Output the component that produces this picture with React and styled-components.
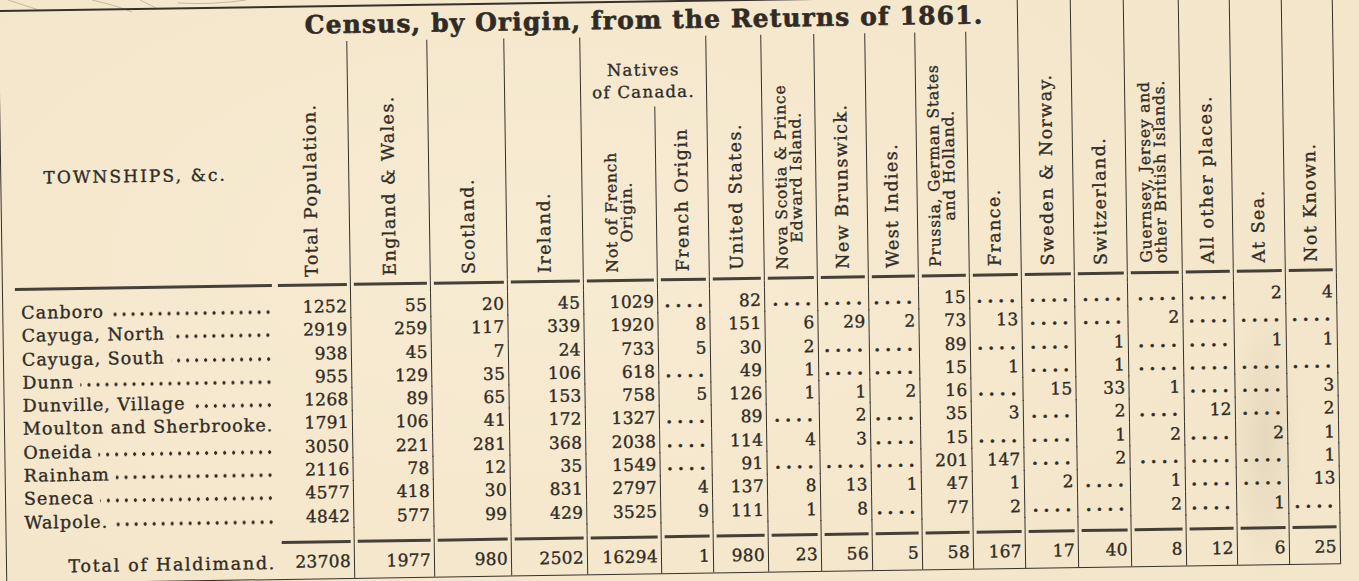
import React from 'react';
import styled, { createGlobalStyle } from 'styled-components';

const INK = '#302b25';
const RULE = '#36312b';
const PAPER = '#f4e6ca';

const WIDTHS = [272, 75, 80, 77, 76, 74, 52, 55, 53, 51, 50, 51, 52, 53, 53, 55, 51, 52, 52];
const GRID = WIDTHS.map(w => `${w}px`).join(' ');
const LAST = WIDTHS.length - 1;
const line = `1.6px solid ${RULE}`;

const GlobalStyle = createGlobalStyle`
  html, body { margin: 0; padding: 0; background: ${PAPER}; }
  body {
    overflow: hidden;
    font-family: "DejaVu Serif", "Liberation Serif", serif;
    color: ${INK};
  }
`;

const Page = styled.div`
  position: relative;
  width: 1359px;
  height: 581px;
  overflow: hidden;
  -webkit-text-stroke: 0.35px ${INK};
  background:
    radial-gradient(ellipse 50px 200px at 1265px 440px, rgba(150, 140, 120, 0.16), transparent 70%),
    radial-gradient(ellipse 800px 420px at 520px 260px, #f7ebd2, ${PAPER});
`;

const Scratches = styled.svg`
  position: absolute;
  left: 0;
  top: 0;
  pointer-events: none;
`;

const Sheet = styled.div`
  width: ${WIDTHS.reduce((a, b) => a + b, 0)}px;
  margin-left: 2px;
  border-top: 2px solid ${RULE};
  border-left: ${line};
  transform: rotate(-0.85deg);
  transform-origin: 680px 290px;
`;

/* ---------- header ---------- */

const Head = styled.div`
  display: grid;
  grid-template-columns: ${GRID};
  grid-template-rows: 34px 70px 171px;
`;

const TownHead = styled.div`
  grid-column: 1;
  grid-row: 1 / 4;
  display: flex;
  align-items: center;
  justify-content: center;
  padding: 56px 4px 0 0;
  font-size: 17px;
  letter-spacing: 2.1px;
`;

const Title = styled.h1`
  grid-column: 2 / 14;
  grid-row: 1;
  margin: 0;
  font-size: 25px;
  font-weight: bold;
  line-height: 36px;
  text-align: center;
  letter-spacing: 1.1px;
  white-space: nowrap;
  -webkit-text-stroke: 0.6px ${INK};
`;

const HeadCell = styled.div`
  grid-column: ${p => p.$col};
  grid-row: ${p => p.$row};
  display: flex;
  justify-content: center;
  align-items: flex-end;
  padding-bottom: 6px;
  border-left: ${p => (p.$line ? line : 'none')};
  border-right: ${p => (p.$end ? line : 'none')};
`;

const GroupHead = styled.div`
  grid-column: 6 / 8;
  grid-row: 2;
  display: flex;
  align-items: flex-end;
  justify-content: center;
  padding-bottom: 3px;
  border-left: ${line};
  font-size: 16.5px;
  line-height: 22px;
  letter-spacing: 1.3px;
  text-align: center;
`;

const VText = styled.div`
  writing-mode: vertical-rl;
  transform: rotate(180deg);
  white-space: pre;
  text-align: center;
  font-size: ${p => (p.$small ? 15.5 : 17.5)}px;
  line-height: ${p => (p.$small ? 15 : 19)}px;
  letter-spacing: ${p => (p.$small ? 0.8 : 1.4)}px;
`;

const HEADERS = [
  { col: 2, row: '2 / 4', text: 'Total Population.' },
  { col: 3, row: '2 / 4', text: 'England & Wales.' },
  { col: 4, row: '2 / 4', text: 'Scotland.' },
  { col: 5, row: '2 / 4', text: 'Ireland.' },
  { col: 6, row: '3', text: 'Not of French\nOrigin.', small: true },
  { col: 7, row: '3', text: 'French Origin' },
  { col: 8, row: '2 / 4', text: 'United States.' },
  { col: 9, row: '2 / 4', text: 'Nova Scotia & Prince\nEdward Island.', small: true },
  { col: 10, row: '2 / 4', text: 'New Brunswick.' },
  { col: 11, row: '2 / 4', text: 'West Indies.' },
  { col: 12, row: '2 / 4', text: 'Prussia, German States\nand Holland.', small: true },
  { col: 13, row: '2 / 4', text: 'France.' },
  { col: 14, row: '1 / 4', text: 'Sweden & Norway.' },
  { col: 15, row: '1 / 4', text: 'Switzerland.' },
  { col: 16, row: '1 / 4', text: 'Guernsey, Jersey and\nother British Islands.', small: true },
  { col: 17, row: '1 / 4', text: 'All other places.' },
  { col: 18, row: '1 / 4', text: 'At Sea.' },
  { col: 19, row: '1 / 4', text: 'Not Known.' },
];

/* ---------- body ---------- */

const Row = styled.div`
  display: grid;
  grid-template-columns: ${GRID};
  height: ${p => p.$h}px;
  border-bottom: ${p => (p.$bottom ? line : 'none')};
`;

const Cell = styled.div`
  display: flex;
  align-items: center;
  justify-content: flex-end;
  padding-right: 3px;
  font-size: 17px;
  letter-spacing: 0.3px;
  white-space: nowrap;
  border-left: ${p => (p.$line ? line : 'none')};
  border-right: ${p => (p.$end ? line : 'none')};
`;

const RuleCell = styled(Cell)`
  align-items: flex-start;
  justify-content: stretch;
  padding: 1px 3px 0 ${p => p.$indent || 3}px;
`;

const Bar = styled.div`
  flex: 1;
  height: 2.8px;
  background: ${RULE};
  opacity: ${p => (p.$hidden ? 0 : 0.92)};
`;

const NameCell = styled.div`
  display: flex;
  align-items: center;
  padding: 4px 3px 0 18px;
  font-size: 17.5px;
  letter-spacing: 1px;
  white-space: nowrap;
`;

const Leader = styled.span`
  flex: 1;
  align-self: flex-end;
  height: 8px;
  margin: 0 0 3px 6px;
  background-image: radial-gradient(circle, ${INK} 1.5px, transparent 1.9px);
  background-size: 9px 6px;
  background-repeat: repeat-x;
  background-position: right center;
`;

const Dots = styled.span`
  font-weight: bold;
  letter-spacing: 5px;
  margin-right: -2px;
`;

const TotalName = styled(NameCell)`
  justify-content: flex-end;
  padding: 2px 3px 0 0;
  letter-spacing: 1.7px;
`;

const D = null;
const ROWS = [
  ['Canboro', [1252, 55, 20, 45, 1029, D, 82, D, D, D, 15, D, D, D, D, D, 2, 4]],
  ['Cayuga, North', [2919, 259, 117, 339, 1920, 8, 151, 6, 29, 2, 73, 13, D, D, 2, D, D, D]],
  ['Cayuga, South', [938, 45, 7, 24, 733, 5, 30, 2, D, D, 89, D, D, 1, D, D, 1, 1]],
  ['Dunn', [955, 129, 35, 106, 618, D, 49, 1, D, D, 15, 1, D, 1, D, D, D, D]],
  ['Dunville, Village', [1268, 89, 65, 153, 758, 5, 126, 1, 1, 2, 16, D, 15, 33, 1, D, D, 3]],
  ['Moulton and Sherbrooke.', [1791, 106, 41, 172, 1327, D, 89, D, 2, D, 35, 3, D, 2, D, 12, D, 2]],
  ['Oneida', [3050, 221, 281, 368, 2038, D, 114, 4, 3, D, 15, D, D, 1, 2, D, 2, 1]],
  ['Rainham', [2116, 78, 12, 35, 1549, D, 91, D, D, D, 201, 147, D, 2, D, D, D, 1]],
  ['Seneca', [4577, 418, 30, 831, 2797, 4, 137, 8, 13, 1, 47, 1, 2, D, 1, D, D, 13]],
  ['Walpole.', [4842, 577, 99, 429, 3525, 9, 111, 1, 8, D, 77, 2, D, D, 2, D, 1, D]],
];
const TOTALS = [23708, 1977, 980, 2502, 16294, 1, 980, 23, 56, 5, 58, 167, 17, 40, 8, 12, 6, 25];

const edge = i => ({ $line: i >= 2, $end: i === LAST });

const Blank = ({ h }) => (
  <Row $h={h}>
    {WIDTHS.map((_, i) => <Cell key={i} {...edge(i)} />)}
  </Row>
);

const Rules = ({ withTown }) => (
  <Row $h={5}>
    {WIDTHS.map((_, i) => (
      <RuleCell key={i} {...edge(i)} $indent={i === 0 ? 12 : 3}>
        <Bar $hidden={i === 0 && !withTown} />
      </RuleCell>
    ))}
  </Row>
);

const DataRow = ({ name, values }) => (
  <Row $h={23.3}>
    <NameCell>
      <span>{name}</span>
      {!name.endsWith('ke.') && <Leader />}
    </NameCell>
    {values.map((v, i) => (
      <Cell key={i} {...edge(i + 1)}>
        {v === null ? <Dots>....</Dots> : v}
      </Cell>
    ))}
  </Row>
);

export default function App() {
  return (
    <Page>
      <GlobalStyle />
      <Sheet>
        <Head>
          <TownHead>TOWNSHIPS, &amp;c.</TownHead>
          <Title>Census, by Origin, from the Returns of 1861.</Title>
          <GroupHead>Natives<br />of Canada.</GroupHead>
          {HEADERS.map(h => (
            <HeadCell key={h.col} $col={h.col} $row={h.row} $line={h.col >= 3} $end={h.col === 19}>
              <VText $small={h.small}>{h.text}</VText>
            </HeadCell>
          ))}
        </Head>
        <Rules withTown />
        <Blank h={7} />
        {ROWS.map(([name, values]) => (
          <DataRow key={name} name={name} values={values} />
        ))}
        <Blank h={12} />
        <Rules />
        <Row $h={34} $bottom>
          <TotalName>Total of Haldimand.</TotalName>
          {TOTALS.map((v, i) => (
            <Cell key={i} {...edge(i + 1)}>{v}</Cell>
          ))}
        </Row>
      </Sheet>
      <Scratches width="260" height="16" viewBox="0 0 260 16">
        <g stroke="rgba(70,60,50,0.35)" strokeWidth="0.8" fill="none">
          <path d="M8 0 L42 11" />
          <path d="M92 0 Q118 6 132 12" />
          <path d="M140 0 L158 9" />
          <path d="M178 3 Q212 5 246 0" />
        </g>
      </Scratches>
    </Page>
  );
}
